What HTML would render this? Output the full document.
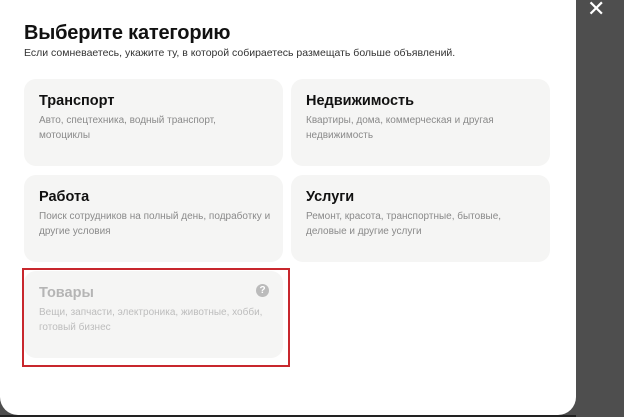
<!DOCTYPE html>
<html><head><meta charset="utf-8"><style>
body{margin:0;width:624px;height:417px;background:#4e4e4e;position:relative;overflow:hidden;font-family:"Liberation Sans",sans-serif}
.m{position:absolute;left:0;top:-20px;width:576px;height:435px;background:#fff;border-radius:18px}
.bot{position:absolute;left:0;top:415px;width:576px;height:2px;background:#222}
h1{position:absolute;left:24px;top:22px;margin:0;font-size:20px;font-weight:bold;color:#111;letter-spacing:-0.2px}
.sub{position:absolute;left:24px;top:47px;font-size:10.5px;color:#333}
.c{position:absolute;width:259px;height:87px;background:#f5f5f4;border-radius:12px}
.c b{position:absolute;left:15px;top:14px;font-size:14.5px;color:#111}
.c p{position:absolute;left:15px;top:34px;margin:0;font-size:10px;line-height:15px;color:#8a8a8a;width:215px}
.red{position:absolute;left:22px;top:268px;width:264px;height:95px;border:2px solid #c8272d}
.x{position:absolute;left:587px;top:-4px;color:#fff;font-size:22px}
</style></head><body>
<div class="m"></div><div class="bot"></div>
<div class="x">✕</div>
<h1>Выберите категорию</h1>
<div class="sub">Если сомневаетесь, укажите ту, в которой собираетесь размещать больше объявлений.</div>
<div class="c" style="left:24px;top:79px"><b>Транспорт</b><p>Авто, спецтехника, водный транспорт, мотоциклы</p></div>
<div class="c" style="left:291px;top:79px"><b>Недвижимость</b><p>Квартиры, дома, коммерческая и другая недвижимость</p></div>
<div class="c" style="left:24px;top:175px"><b>Работа</b><p style="width:235px">Поиск сотрудников на полный день, подработку и другие условия</p></div>
<div class="c" style="left:291px;top:175px"><b>Услуги</b><p>Ремонт, красота, транспортные, бытовые, деловые и другие услуги</p></div>
<div class="c" style="left:24px;top:271px"><b style="color:#b5b5b5">Товары</b><p style="color:#bdbdbd;width:235px">Вещи, запчасти, электроника, животные, хобби, готовый бизнес</p>
<div style="position:absolute;left:232px;top:13px;width:13px;height:13px;border-radius:50%;background:#bbb;color:#fff;font-size:10px;font-weight:bold;text-align:center;line-height:13px">?</div></div>
<div class="red"></div>
</body></html>
